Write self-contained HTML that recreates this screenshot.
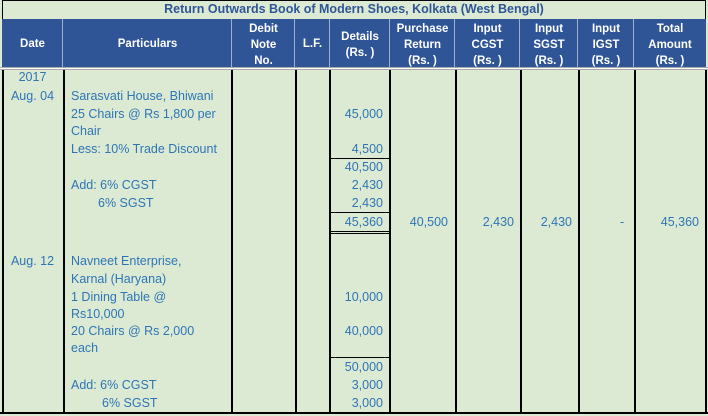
<!DOCTYPE html><html><head><style>
body{margin:0;width:708px;height:416px;background:#fff;overflow:hidden;font-family:"Liberation Sans",sans-serif;}
.a{position:absolute}
.t{position:absolute;font-size:12.5px;color:#2e75b6;white-space:nowrap;line-height:14px}
.r{text-align:right}
.h{position:absolute;color:#fff;font-weight:bold;font-size:11.5px;text-align:center;line-height:16px}
.v{position:absolute;top:70px;height:342px;width:2px;background:#000}
.hl{position:absolute;height:1px;background:#000;left:330px;width:60px}
</style></head><body>
<div class="a" style="left:0;top:0;width:708px;height:416px;background:#dcead3"></div>
<div class="a" style="left:2px;top:0;width:704px;height:19px;border:1px solid #000;border-bottom:0;box-sizing:border-box"></div>
<div class="a" style="left:0;top:2px;width:708px;text-align:center;font-weight:bold;font-size:12.5px;color:#2f5597">Return Outwards Book of Modern Shoes, Kolkata (West Bengal)</div>
<div class="a" style="left:2px;top:19px;width:704px;height:48px;background:#2f5597"></div>
<div class="a" style="left:0;top:67px;width:708px;height:3px;background:#fff;border-top:1px solid #aaa;border-bottom:1px solid #aaa;box-sizing:border-box"></div>
<div class="h" style="left:2px;width:61px;top:36px">Date</div>
<div class="h" style="left:63px;width:169px;top:36px">Particulars</div>
<div class="h" style="left:232px;width:63px;top:21px">Debit<br>Note<br>No.</div>
<div class="h" style="left:295px;width:35px;top:36px">L.F.</div>
<div class="h" style="left:330px;width:60px;top:29px">Details<br>(Rs. )</div>
<div class="h" style="left:390px;width:65px;top:21px">Purchase<br>Return<br>(Rs. )</div>
<div class="h" style="left:455px;width:65px;top:21px">Input<br>CGST<br>(Rs. )</div>
<div class="h" style="left:520px;width:58px;top:21px">Input<br>SGST<br>(Rs. )</div>
<div class="h" style="left:578px;width:56px;top:21px">Input<br>IGST<br>(Rs. )</div>
<div class="h" style="left:634px;width:72px;top:21px">Total<br>Amount<br>(Rs. )</div>
<div class="a" style="left:62px;top:19px;width:1px;height:48px;background:#fff8"></div>
<div class="a" style="left:231px;top:19px;width:1px;height:48px;background:#fff8"></div>
<div class="a" style="left:294px;top:19px;width:1px;height:48px;background:#fff8"></div>
<div class="a" style="left:329px;top:19px;width:1px;height:48px;background:#fff8"></div>
<div class="a" style="left:389px;top:19px;width:1px;height:48px;background:#fff8"></div>
<div class="a" style="left:454px;top:19px;width:1px;height:48px;background:#fff8"></div>
<div class="a" style="left:519px;top:19px;width:1px;height:48px;background:#fff8"></div>
<div class="a" style="left:577px;top:19px;width:1px;height:48px;background:#fff8"></div>
<div class="a" style="left:633px;top:19px;width:1px;height:48px;background:#fff8"></div>
<div class="v" style="left:2px"></div><div class="v" style="left:63px"></div><div class="v" style="left:231px"></div><div class="v" style="left:295px"></div><div class="v" style="left:329px"></div><div class="v" style="left:389px"></div><div class="v" style="left:455px"></div><div class="v" style="left:520px"></div><div class="v" style="left:578px"></div><div class="v" style="left:634px"></div><div class="v" style="left:705px"></div>
<div class="a" style="left:0;top:412px;width:708px;height:2px;background:#000"></div>
<div class="hl" style="top:158px"></div><div class="hl" style="top:212px"></div><div class="hl" style="top:231px"></div><div class="hl" style="top:233px"></div><div class="hl" style="top:357px"></div>
<div class="t" style="left:2px;width:61px;text-align:center;top:70px">2017</div>
<div class="t" style="left:2px;width:61px;text-align:center;top:89px">Aug. 04</div>
<div class="t" style="left:2px;width:61px;text-align:center;top:254px">Aug. 12</div>
<div class="t" style="left:71px;top:89px">Sarasvati House, Bhiwani</div>
<div class="t" style="left:71px;top:107px">25 Chairs @ Rs 1,800 per</div>
<div class="t" style="left:71px;top:124px">Chair</div>
<div class="t" style="left:71px;top:142px">Less: 10% Trade Discount</div>
<div class="t" style="left:71px;top:178px">Add: 6% CGST</div>
<div class="t" style="left:98px;top:196px">6% SGST</div>
<div class="t" style="left:71px;top:254px">Navneet Enterprise,</div>
<div class="t" style="left:71px;top:272px">Karnal (Haryana)</div>
<div class="t" style="left:71px;top:290px">1 Dining Table @</div>
<div class="t" style="left:71px;top:307px">Rs10,000</div>
<div class="t" style="left:71px;top:324px">20 Chairs @ Rs 2,000</div>
<div class="t" style="left:71px;top:341px">each</div>
<div class="t" style="left:71px;top:378px">Add: 6% CGST</div>
<div class="t" style="left:102px;top:396px">6% SGST</div>
<div class="t r" style="left:330px;width:53px;top:107px">45,000</div>
<div class="t r" style="left:330px;width:53px;top:142px">4,500</div>
<div class="t r" style="left:330px;width:53px;top:160px">40,500</div>
<div class="t r" style="left:330px;width:53px;top:178px">2,430</div>
<div class="t r" style="left:330px;width:53px;top:196px">2,430</div>
<div class="t r" style="left:330px;width:53px;top:215px">45,360</div>
<div class="t r" style="left:330px;width:53px;top:290px">10,000</div>
<div class="t r" style="left:330px;width:53px;top:324px">40,000</div>
<div class="t r" style="left:330px;width:53px;top:360px">50,000</div>
<div class="t r" style="left:330px;width:53px;top:378px">3,000</div>
<div class="t r" style="left:330px;width:53px;top:396px">3,000</div>
<div class="t r" style="left:390px;width:58px;top:215px">40,500</div>
<div class="t r" style="left:455px;width:59px;top:215px">2,430</div>
<div class="t r" style="left:520px;width:52px;top:215px">2,430</div>
<div class="t" style="left:620px;top:215px">-</div>
<div class="t r" style="left:634px;width:65px;top:215px">45,360</div>
</body></html>
